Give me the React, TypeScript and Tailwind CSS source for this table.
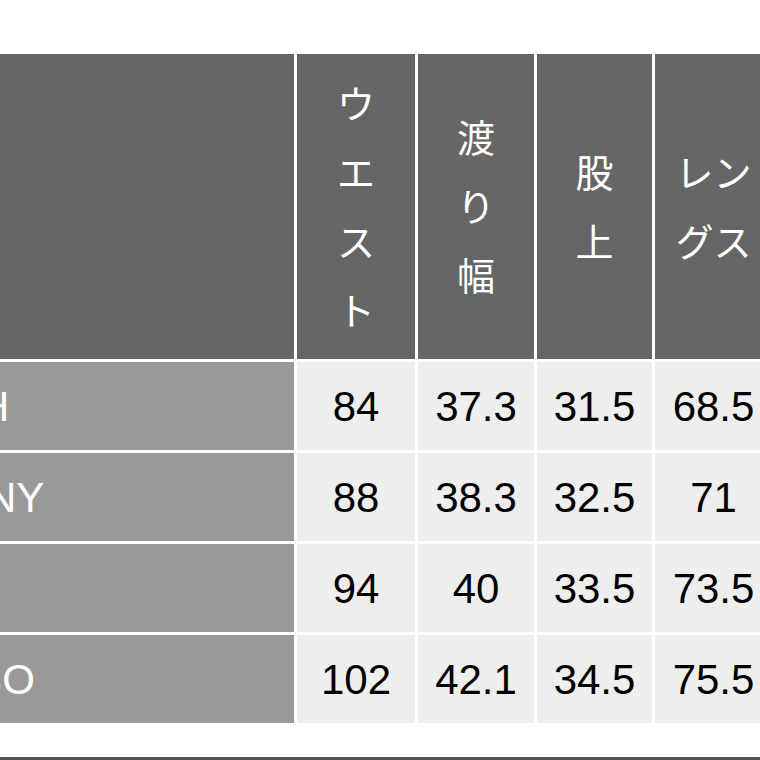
const headers: string[][] = [
  ["ウ", "エ", "ス", "ト"],
  ["渡", "り", "幅"],
  ["股", "上"],
  ["レン", "グス"],
];

const rows = [
  { name: "MESH", values: ["84", "37.3", "31.5", "68.5"] },
  { name: "SKINNY", values: ["88", "38.3", "32.5", "71"] },
  { name: "SLIM", values: ["94", "40", "33.5", "73.5"] },
  { name: "JUMBO", values: ["102", "42.1", "34.5", "75.5"] },
];

export default function App() {
  return (
    <main
      className="h-[760px] w-[760px] overflow-hidden bg-white"
      style={{ fontFamily: '"Liberation Sans", "Noto Sans CJK JP", sans-serif' }}
    >
      <div className="pt-[54px]">
        <div className="-ml-[112px] grid w-[886px] grid-cols-[406px_118px_116px_115px_117px] gap-[3px]">
          <div className="h-[305px] bg-[#666666]" />
          {headers.map((lines, i) => (
            <div
              key={i}
              className="flex h-[305px] flex-col items-center justify-center bg-[#666666] pb-[4px] text-[38px] leading-[69px] text-white"
              style={{ fontFamily: '"Noto Sans CJK JP", sans-serif' }}
            >
              {lines.map((l) => (
                <div key={l}>{l}</div>
              ))}
            </div>
          ))}

          {rows.map((row) => (
            <>
              <div
                key={row.name}
                className="flex h-[88px] items-center bg-[#999999] text-[42px] text-white"
              >
                {row.name}
              </div>
              {row.values.map((v, j) => (
                <div
                  key={row.name + j}
                  className="flex h-[88px] items-center justify-center bg-[#eeeeee] text-[42px] text-black"
                >
                  {v}
                </div>
              ))}
            </>
          ))}
        </div>
        <div className="mt-[34px] h-[3px] bg-[#555555]" />
      </div>
    </main>
  );
}
